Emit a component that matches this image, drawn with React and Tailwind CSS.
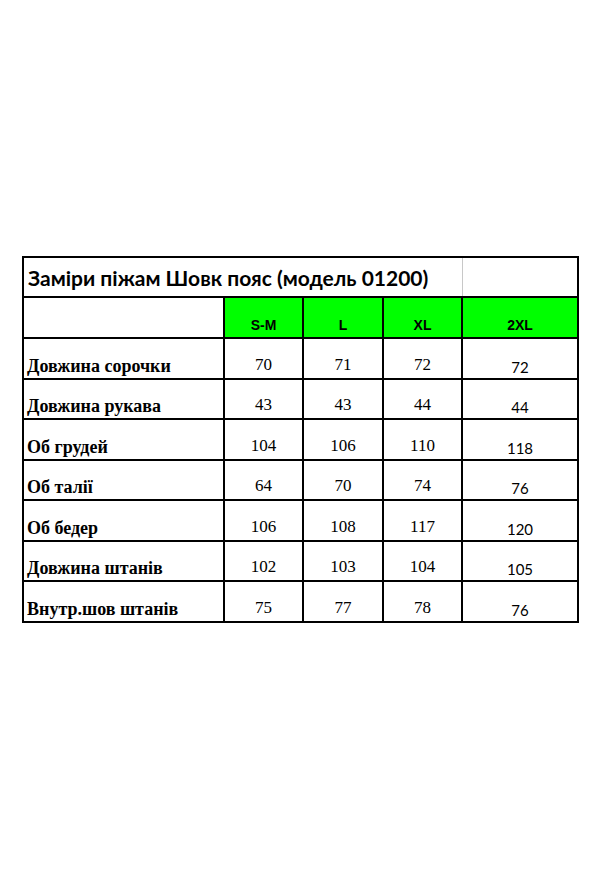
const sizes = ["S-M", "L", "XL", "2XL"];

const rows = [
  ["Довжина сорочки", 70, 71, 72, 72],
  ["Довжина рукава", 43, 43, 44, 44],
  ["Об грудей", 104, 106, 110, 118],
  ["Об талії", 64, 70, 74, 76],
  ["Об бедер", 106, 108, 117, 120],
  ["Довжина штанів", 102, 103, 104, 105],
  ["Внутр.шов штанів", 75, 77, 78, 76],
];

const serif = "font-['Liberation_Serif',serif]";

export default function App() {
  return (
    <div className="min-h-[890px] w-[605px] bg-white pl-[22px] pt-[256px]">
      <div className="grid w-[557px] grid-cols-[199px_77px_78px_77px_114px] grid-rows-[38px_39px_39px_38px_39px_38px_39px_38px_39px] gap-[2px] bg-black p-[2px]">
        {/* title row */}
        <div className="col-span-5 flex bg-white">
          <div className="flex flex-1 items-center pl-[4px] pt-[1px] font-['Lato',sans-serif] text-[21px] font-bold text-black">
            Заміри піжам Шовк пояс (модель 01200)
          </div>
          <div className="w-[115px] border-l border-[#c8c8c8]" />
        </div>

        {/* size header */}
        <div className="bg-white" />
        {sizes.map((s) => (
          <div
            key={s}
            className="flex items-end justify-center bg-[#00ff00] pb-[1px] font-['Liberation_Sans',sans-serif] text-[14px] font-bold text-black"
          >
            {s}
          </div>
        ))}

        {/* data */}
        {rows.map((r) => (
          <div key={r[0]} className="contents">
            <div className={`flex items-end bg-white pb-[2px] pl-[3px] ${serif} text-[18px] leading-[20px] font-bold text-black`}>
              {r[0]}
            </div>
            {r.slice(1, 4).map((v, i) => (
              <div
                key={i}
                className={`flex items-end justify-center bg-white pb-[1px] ${serif} text-[17px] text-black`}
              >
                {v}
              </div>
            ))}
            <div className="flex items-end justify-center bg-white font-['Lato',sans-serif] text-[15px] text-black">
              {r[4]}
            </div>
          </div>
        ))}
      </div>
    </div>
  );
}
